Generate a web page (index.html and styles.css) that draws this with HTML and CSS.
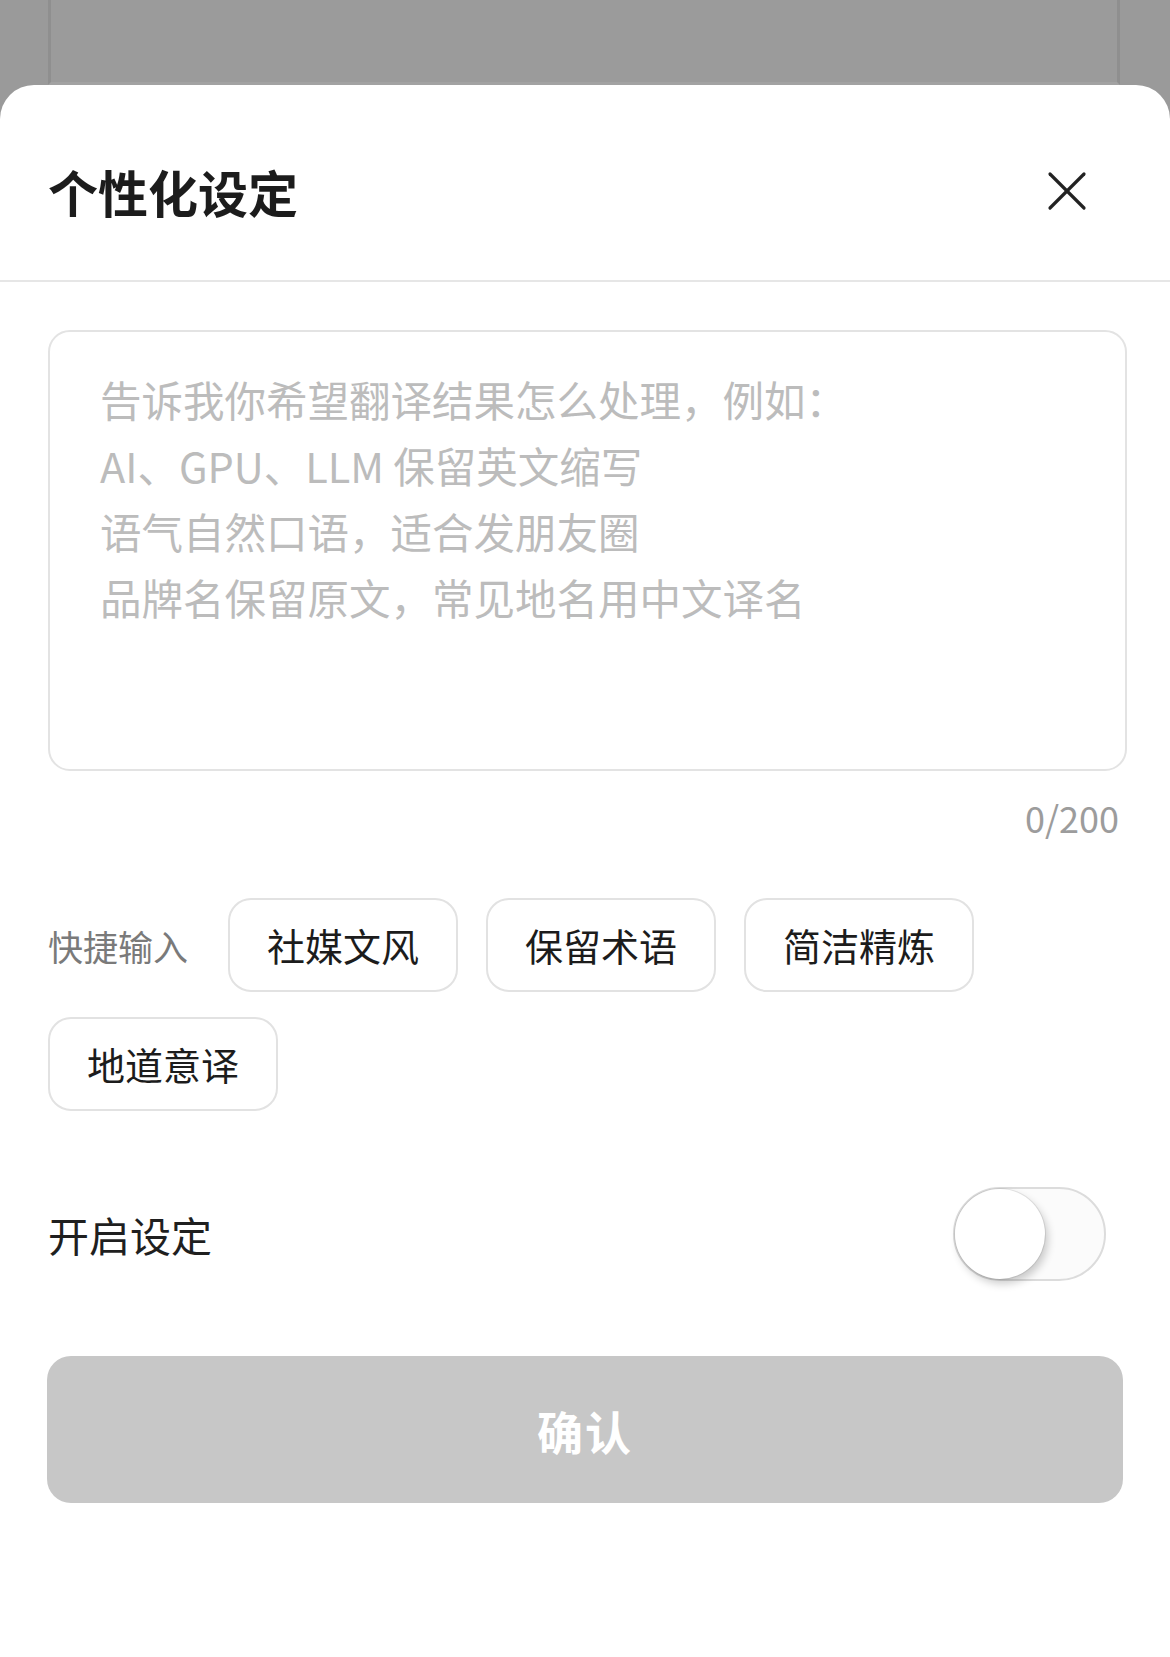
FILE: index.html
```html
<!DOCTYPE html>
<html lang="zh-CN">
<head>
<meta charset="utf-8">
<title>个性化设定</title>
<link rel="stylesheet" href="styles.css">
</head>
<body>
<div class="backdrop"><div class="backdrop-card"></div></div>
<section class="sheet">
  <header class="sheet-header">
    <h1 class="sheet-title">个性化设定</h1>
    <button class="close-btn" aria-label="关闭">
      <svg width="40" height="40" viewBox="0 0 40 40" aria-hidden="true">
        <line x1="3" y1="3" x2="37" y2="37" stroke="#222" stroke-width="3.2" stroke-linecap="round"/>
        <line x1="37" y1="3" x2="3" y2="37" stroke="#222" stroke-width="3.2" stroke-linecap="round"/>
      </svg>
    </button>
  </header>
  <div class="content">
    <div class="input-box">
      <div class="placeholder">
        <div>告诉我你希望翻译结果怎么处理，例如：</div>
        <div>AI、GPU、LLM 保留英文缩写</div>
        <div>语气自然口语，适合发朋友圈</div>
        <div>品牌名保留原文，常见地名用中文译名</div>
      </div>
    </div>
    <div class="counter">0/200</div>
    <div class="quick">
      <span class="quick-label">快捷输入</span>
      <button class="chip">社媒文风</button>
      <button class="chip">保留术语</button>
      <button class="chip">简洁精炼</button>
      <button class="chip">地道意译</button>
    </div>
    <div class="toggle-row">
      <span class="toggle-label">开启设定</span>
      <div class="toggle"><div class="knob"></div></div>
    </div>
    <button class="confirm">确认</button>
  </div>
</section>
</body>
</html>
```
FILE: styles.css
```css
html, body {
  margin: 0;
  padding: 0;
}
body {
  width: 1170px;
  height: 1657px;
  overflow: hidden;
  background: #9a9a9a;
  font-family: "Noto Sans CJK SC", "Noto Sans", sans-serif;
}
.backdrop {
  height: 85px;
  padding: 0 48px;
}
.backdrop-card {
  height: 82px;
  margin-right: 2px;
  border-left: 3px solid #8f8f8f;
  border-right: 3px solid #8f8f8f;
  border-bottom: 3px solid #a2a2a2;
  background: #9b9b9b;
}
.sheet {
  background: #fff;
  border-radius: 34px 34px 0 0;
  min-height: 1572px;
}
.sheet-header {
  height: 179px;
  padding: 16px 83px 0 48px;
  display: flex;
  align-items: center;
  justify-content: space-between;
  border-bottom: 2px solid #e6e6e6;
}
.sheet-title {
  margin: 0;
  font-size: 50px;
  line-height: 1;
  font-weight: 600;
  color: #1c1c1c;
}
.close-btn {
  width: 40px;
  height: 40px;
  padding: 0;
  border: 0;
  background: none;
  display: flex;
}
.content {
  padding: 48px 43px 0 48px;
  display: flex;
  flex-direction: column;
}
.input-box {
  height: 441px;
  box-sizing: border-box;
  border: 2px solid #e3e3e3;
  border-radius: 22px;
  padding: 34px 50px 0 50px;
}
.placeholder {
  font-size: 41.5px;
  line-height: 66px;
  color: #bcbcbc;
}
.counter {
  margin-top: 22px;
  margin-right: 8px;
  text-align: right;
  font-size: 36px;
  line-height: 48px;
  color: #9c9c9c;
}
.quick {
  margin-top: 57px;
  display: flex;
  flex-wrap: wrap;
  align-items: center;
  column-gap: 28px;
  row-gap: 25px;
}
.quick-label {
  font-size: 35px;
  line-height: 1;
  color: #7a7a7a;
  margin-right: 12px;
}
.chip {
  height: 94px;
  box-sizing: border-box;
  padding: 0 37px;
  border: 2px solid #e2e2e2;
  border-radius: 23px;
  background: #fff;
  font-family: inherit;
  font-size: 38px;
  line-height: 1;
  color: #1c1c1c;
}
.toggle-row {
  margin-top: 76px;
  display: flex;
  align-items: center;
  justify-content: space-between;
  height: 94px;
}
.toggle-label {
  font-size: 41px;
  line-height: 1;
  color: #1f1f1f;
}
.toggle {
  width: 153px;
  height: 94px;
  box-sizing: border-box;
  margin-right: 21px;
  border: 2px solid #dcdcdc;
  border-radius: 47px;
  background: #fbfbfb;
  display: flex;
  align-items: center;
}
.knob {
  width: 90px;
  height: 90px;
  border-radius: 50%;
  background: #fff;
  box-shadow: 0 0 0 1px rgba(0, 0, 0, 0.08), 3px 5px 8px rgba(0, 0, 0, 0.2);
}
.confirm {
  margin: 75px 4px 0 -1px;
  height: 147px;
  border: 0;
  border-radius: 24px;
  background: #c7c7c7;
  color: #fff;
  font-family: inherit;
  font-size: 46px;
  font-weight: 700;
  letter-spacing: 2px;
}
```
